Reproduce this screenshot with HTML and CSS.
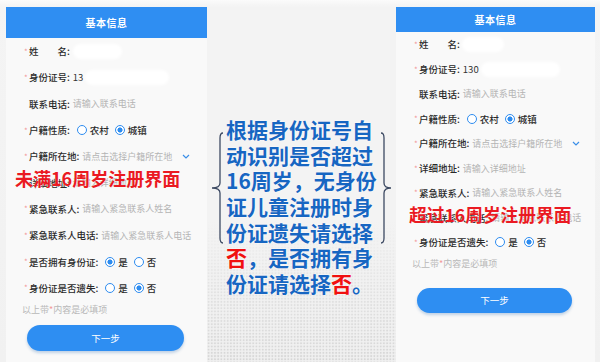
FILE: index.html
```html
<!DOCTYPE html>
<html lang="zh-CN">
<head>
<meta charset="utf-8">
<title>注册界面说明</title>
<link rel="stylesheet" href="styles.css">
</head>
<body>
<div class="page">
  <section class="phone phone-left">
    <div class="phone-head">基本信息</div>
    <div class="form">
      <div class="row"><span class="star">*</span><span class="label">姓&emsp;&emsp;名:</span><span class="blob blob-name"></span></div>
      <div class="row"><span class="star">*</span><span class="label">身份证号:</span><span class="value">13</span><span class="blob blob-id"></span></div>
      <div class="row"><span class="star"></span><span class="label">联系电话:</span><span class="ph">请输入联系电话</span></div>
      <div class="row"><span class="star">*</span><span class="label">户籍性质:</span><span class="radio"></span><span class="opt">农村</span><span class="radio on"></span><span class="opt">城镇</span></div>
      <div class="row"><span class="star">*</span><span class="label">户籍所在地:</span><span class="ph">请点击选择户籍所在地</span><svg class="chev" viewBox="0 0 8 5" width="8" height="5"><path d="M1 1 L4 4 L7 1" fill="none" stroke="#3b8fe8" stroke-width="1.2"/></svg></div>
      <div class="row"><span class="star">*</span><span class="label">详细地址:</span><span class="ph">请输入详细地址</span></div>
      <div class="row"><span class="star">*</span><span class="label">紧急联系人:</span><span class="ph">请输入紧急联系人姓名</span></div>
      <div class="row"><span class="star">*</span><span class="label">紧急联系人电话:</span><span class="ph">请输入紧急联系人电话</span></div>
      <div class="row"><span class="star">*</span><span class="label">是否拥有身份证:</span><span class="radio on"></span><span class="opt">是</span><span class="radio"></span><span class="opt">否</span></div>
      <div class="row"><span class="star">*</span><span class="label">身份证是否遗失:</span><span class="radio"></span><span class="opt">是</span><span class="radio on"></span><span class="opt">否</span></div>
    </div>
    <p class="note">以上带<span class="note-star">*</span>内容是必填项</p>
    <div class="btn">下一步</div>
    <div class="tag">未满16周岁注册界面</div>
  </section>

  <section class="middle">
    <div class="callout">
      <svg class="brace brace-l" viewBox="0 0 14 112" width="14" height="112"><path d="M13 1 Q10 1 10 6 V51 Q10 56 2 56 Q10 56 10 61 V106 Q10 111 13 111" fill="none" stroke="#3d4a63" stroke-width="1.3"/></svg>
      <p class="callout-text">根据身份证号自<br>动识别是否超过<br>16周岁，无身份<br>证儿童注册时身<br>份证遗失请选择<br><span class="red">否</span>，是否拥有身<br>份证请选择<span class="red">否</span>。</p>
      <svg class="brace brace-r" viewBox="0 0 12 112" width="12" height="112"><path d="M1 1 Q4 1 4 6 V51 Q4 56 11 56 Q4 56 4 61 V106 Q4 111 1 111" fill="none" stroke="#3d4a63" stroke-width="1.3"/></svg>
    </div>
  </section>

  <section class="phone phone-right">
    <div class="phone-head">基本信息</div>
    <div class="form">
      <div class="row"><span class="star">*</span><span class="label">姓&emsp;&emsp;名:</span><span class="blob blob-name"></span></div>
      <div class="row"><span class="star">*</span><span class="label">身份证号:</span><span class="value">130</span><span class="blob blob-id"></span></div>
      <div class="row"><span class="star"></span><span class="label">联系电话:</span><span class="ph">请输入联系电话</span></div>
      <div class="row"><span class="star">*</span><span class="label">户籍性质:</span><span class="radio"></span><span class="opt">农村</span><span class="radio on"></span><span class="opt">城镇</span></div>
      <div class="row"><span class="star">*</span><span class="label">户籍所在地:</span><span class="ph">请点击选择户籍所在地</span><svg class="chev" viewBox="0 0 8 5" width="8" height="5"><path d="M1 1 L4 4 L7 1" fill="none" stroke="#3b8fe8" stroke-width="1.2"/></svg></div>
      <div class="row"><span class="star">*</span><span class="label">详细地址:</span><span class="ph">请输入详细地址</span></div>
      <div class="row"><span class="star">*</span><span class="label">紧急联系人:</span><span class="ph">请输入紧急联系人姓名</span></div>
      <div class="row"><span class="star">*</span><span class="label">紧急联系人电话:</span><span class="ph">请输入紧急联系人电话</span></div>
      <div class="row"><span class="star">*</span><span class="label">身份证是否遗失:</span><span class="radio"></span><span class="opt">是</span><span class="radio on"></span><span class="opt">否</span></div>
    </div>
    <p class="note">以上带<span class="note-star">*</span>内容是必填项</p>
    <div class="btn">下一步</div>
    <div class="tag">超过16周岁注册界面</div>
  </section>
</div>
</body>
</html>
```

FILE: styles.css
```css
* { box-sizing: border-box; }

body {
  margin: 0;
  width: 600px;
  height: 362px;
  overflow: hidden;
  background: linear-gradient(to bottom, #fbfbfb 0, #f4f4f4 6px, #f1f1f1 100%);
  font-family: "Noto Sans CJK SC", "Noto Sans", sans-serif;
}

.page {
  display: flex;
  height: 362px;
  padding: 7px 5px 0 6px;
}

/* ---------- phone panels ---------- */
.phone {
  position: relative;
  display: flex;
  flex-direction: column;
  background: #f9f9f9;
}

.phone-left { width: 201px; }
.phone-right { width: 199px; }

.phone-head {
  display: flex;
  align-items: center;
  justify-content: center;
  background: #2f8ef2;
  color: #fff;
  font-size: 10px;
  font-weight: 700;
  letter-spacing: 0.5px;
}

.phone-left .phone-head { height: 31px; }
.phone-right .phone-head { height: 25px; }

.form { display: flex; flex-direction: column; }

.row {
  display: flex;
  align-items: center;
  padding-left: 18px;
  font-size: 9.5px;
  color: #2a2a2a;
  white-space: nowrap;
}

.phone-left .row { height: 26.3px; }
.phone-right .row { height: 24.75px; }

.star {
  width: 5px;
  color: #f29a9a;
  font-size: 8px;
}

.label { margin-right: 3px; font-weight: 500; }

.value { color: #333; }

.ph {
  color: #b4b4b4;
  font-size: 9px;
}

.chev { margin-left: 10px; }

.blob {
  display: inline-block;
  height: 15px;
  background: #fff;
  border-radius: 8px;
  filter: blur(1.5px);
}

.phone-left .blob-name { width: 49px; }
.phone-left .blob-id { width: 84px; margin-left: 2px; }
.phone-right .blob-name { width: 42px; margin-left: -1px; }
.phone-right .blob-id { width: 79px; margin-left: 2px; }

.radio {
  width: 10px;
  height: 10px;
  border: 1.3px solid #2d8cf0;
  border-radius: 50%;
  background: #fff;
  margin: 0 3px 0 4px;
}

.radio.on {
  background: radial-gradient(circle, #2d8cf0 0 2.3px, #fff 2.8px);
}

.opt { color: #2a2a2a; font-weight: 500; margin-right: 2px; }

.note {
  margin: 2px 0 0 16px;
  line-height: 14px;
  font-size: 9px;
  color: #b8b8b8;
}

.note-star { color: #f29a9a; }

.btn {
  display: flex;
  align-items: center;
  justify-content: center;
  margin: 0 23px 0 21px;
  border-radius: 14px;
  background: #2e8ef2;
  box-shadow: 0 2px 3px rgba(20, 90, 170, 0.25);
  color: #fff;
  font-size: 9.5px;
}

.phone-left .btn { height: 26px; margin-top: 8px; }
.phone-right .btn { height: 25px; margin-top: 17px; }

.tag {
  position: absolute;
  color: #ea1a22;
  font-size: 18px;
  font-weight: 700;
  line-height: 18px;
  white-space: nowrap;
  text-shadow: 0 0 1px #fff;
}

.phone-left .tag { left: 9px; top: 162px; }
.phone-right .tag { left: 13px; top: 198px; font-size: 17.7px; }

/* ---------- middle callout ---------- */
.middle {
  flex: 1;
  background:
    linear-gradient(to bottom, #f3f3f3 0, #f3f3f3 60%, rgba(243, 243, 243, 0.35) 82%, rgba(243, 243, 243, 0) 100%),
    radial-gradient(circle, #d6d6d6 0 0.9px, transparent 1.3px) 0 0 / 3.2px 3.2px,
    #f0f0f0;
}

.callout {
  display: flex;
  align-items: flex-start;
  margin-top: 110px;
  padding-left: 3px;
}

.brace { flex: none; margin-top: 15px; }

.callout-text {
  margin: 0 3px 0 2px;
  font-size: 21px;
  line-height: 25.67px;
  font-weight: 700;
  color: #1766c2;
  white-space: nowrap;
  text-shadow: 0 0 2px #fff;
}

.red { color: #f01010; }
```
